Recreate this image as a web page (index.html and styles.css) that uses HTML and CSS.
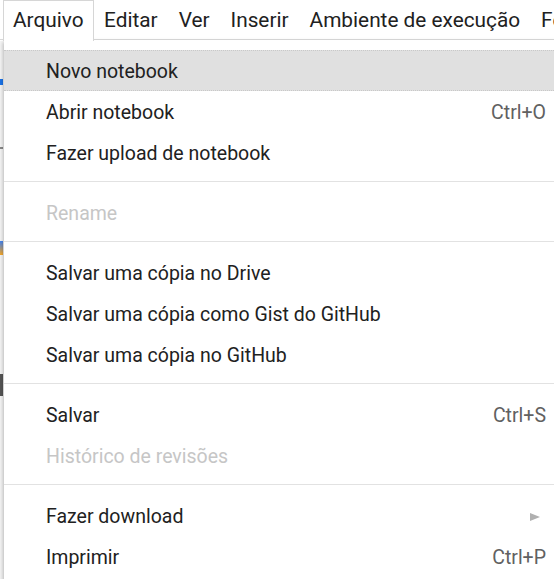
FILE: index.html
```html
<!DOCTYPE html>
<html lang="pt">
<head>
<meta charset="utf-8">
<link rel="stylesheet" href="styles.css">
</head>
<body>
<div class="screen">
  <nav class="menubar">
    <div class="mb-item active">Arquivo</div>
    <div class="mb-item">Editar</div>
    <div class="mb-item">Ver</div>
    <div class="mb-item">Inserir</div>
    <div class="mb-item">Ambiente de execução</div>
    <div class="mb-item">Ferramentas</div>
  </nav>
  <div class="backdrop">
    <span class="mark mark-a"></span>
    <span class="mark mark-b"></span>
    <span class="mark mark-c"></span>
    <span class="mark mark-d"></span>
  </div>
  <div class="menu">
    <div class="item hover"><span>Novo notebook</span></div>
    <div class="item"><span>Abrir notebook</span><span class="shortcut">Ctrl+O</span></div>
    <div class="item"><span>Fazer upload de notebook</span></div>
    <div class="sep"></div>
    <div class="item disabled"><span>Rename</span></div>
    <div class="sep"></div>
    <div class="item"><span>Salvar uma cópia no Drive</span></div>
    <div class="item"><span>Salvar uma cópia como Gist do GitHub</span></div>
    <div class="item"><span>Salvar uma cópia no GitHub</span></div>
    <div class="sep"></div>
    <div class="item"><span>Salvar</span><span class="shortcut">Ctrl+S</span></div>
    <div class="item disabled"><span>Histórico de revisões</span></div>
    <div class="sep"></div>
    <div class="item"><span>Fazer download</span><span class="arrow"></span></div>
    <div class="item"><span>Imprimir</span><span class="shortcut">Ctrl+P</span></div>
  </div>
</div>
</body>
</html>
```

FILE: styles.css
```css
html, body {
  margin: 0;
  padding: 0;
  background: #ffffff;
}
.screen {
  position: relative;
  width: 554px;
  height: 579px;
  overflow: hidden;
  font-family: Roboto, "Noto Sans", sans-serif;
  color: #212121;
}
.menubar {
  display: flex;
  height: 40px;
  box-sizing: border-box;
  border-bottom: 1px solid #dadada;
  padding-left: 3px;
  white-space: nowrap;
}
.mb-item {
  font-size: 20.8px;
  line-height: 40px;
  height: 40px;
  padding: 0 10.5px;
  box-sizing: border-box;
  flex: none;
}
.mb-item.active {
  border: 1px solid #d6d6d6;
  border-bottom: none;
  background: #fff;
  height: 41px;
  padding: 0 9px;
  line-height: 38px;
  position: relative;
  z-index: 3;
}
.backdrop {
  position: absolute;
  left: 0;
  top: 41px;
  width: 6px;
  bottom: 0;
  background: #f5f5f5;
}
.mark {
  position: absolute;
  left: 0;
  width: 3px;
}
.mark-a { top: 38px; height: 6px; background: #1a73e8; }
.mark-b { top: 106px; height: 2px; background: #888; }
.mark-c { top: 200px; height: 14px; background: linear-gradient(#4285f4, #f9a825); }
.mark-d { top: 333px; height: 22px; background: #555; }
.menu {
  position: absolute;
  left: 4px;
  top: 40px;
  width: 570px;
  background: #fff;
  padding: 10px 0;
  box-shadow: -1px 2px 4px rgba(0,0,0,0.25);
  z-index: 2;
}
.item {
  display: flex;
  align-items: center;
  justify-content: space-between;
  height: 41px;
  box-sizing: border-box;
  padding: 2px 28px 0 42px;
  font-size: 19.5px;
  border-top: 1px dotted transparent;
  border-bottom: 1px dotted transparent;
  white-space: nowrap;
}
.item.hover {
  background: #e0e0e0;
  border-top-color: #c8c8c8;
  border-bottom-color: #c8c8c8;
}
.item.disabled {
  color: #c6c6c6;
}
.shortcut {
  color: #616161;
}
.arrow {
  width: 0;
  height: 0;
  border-top: 4px solid transparent;
  border-bottom: 4px solid transparent;
  border-left: 10px solid #b0b0b0;
  margin-right: 6px;
}
.sep {
  height: 1px;
  background: #e2e2e2;
  margin: 8px 0 10px;
}
```
